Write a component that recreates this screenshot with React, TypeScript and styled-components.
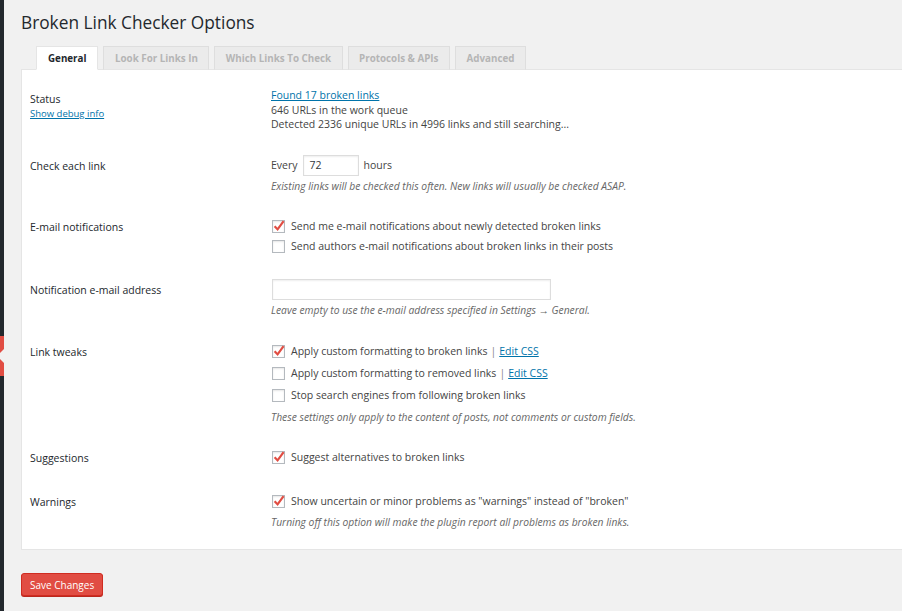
import React from "react";
import styled, { createGlobalStyle } from "styled-components";

const GlobalStyle = createGlobalStyle`
  html, body { margin: 0; padding: 0; background: #f1f1f1; }
  body {
    font-family: "Open Sans", "Noto Sans", sans-serif;
    font-size: 10.5px;
    color: #444;
  }
  * { box-sizing: border-box; }
`;

const Page = styled.div`
  display: flex;
  width: 902px;
  height: 611px;
  overflow: hidden;
`;

const Sidebar = styled.div`
  flex: none;
  width: 4px;
  background: #23282d;
  padding-top: 336px;
  overflow: hidden;
`;

const MenuMarker = styled.div`
  position: relative;
  height: 40px;
  background: #e14d43;
  &::after {
    content: "";
    position: absolute;
    right: 0;
    top: 50%;
    margin-top: -7px;
    width: 0;
    height: 0;
    border-top: 7px solid transparent;
    border-bottom: 7px solid transparent;
    border-right: 7px solid #f1f1f1;
  }
`;

const Main = styled.main`
  flex: 1;
  min-width: 0;
  padding-left: 17px;
`;

const Title = styled.h1`
  margin: 0;
  padding-top: 10px;
  font-size: 17.3px;
  line-height: 26px;
  font-weight: 400;
  color: #23282d;
`;

const TabBar = styled.nav`
  display: flex;
  gap: 5px;
  margin-top: 10px;
  padding-left: 15px;
  position: relative;
  z-index: 1;
`;

const Tab = styled.a<{ $active?: boolean }>`
  display: flex;
  align-items: center;
  height: 24px;
  margin-bottom: -1px;
  padding: 0 ${(p) => (p.$active ? 11 : 10.5)}px;
  font-size: 9.8px;
  font-weight: 700;
  text-decoration: none;
  border: 1px solid ${(p) => (p.$active ? "#e5e5e5" : "#dedede")};
  border-bottom-color: ${(p) => (p.$active ? "#fff" : "#e5e5e5")};
  background: ${(p) => (p.$active ? "#fff" : "#ebebeb")};
  color: ${(p) => (p.$active ? "#23282d" : "#b5b5b5")};
`;

const Panel = styled.section`
  background: #fff;
  border: 1px solid #e5e5e5;
  margin-right: -10px;
  padding: 6.5px 0 8px 8px;
`;

const Row = styled.div`
  display: grid;
  grid-template-columns: 241px 1fr;
  padding: 11.5px 0;
`;

const Label = styled.div`
  padding-top: 4px;
  line-height: 14.5px;
  color: #23282d;
  font-size: 10.5px;
`;

const Field = styled.div`
  line-height: 14.5px;
  color: #444;
`;

const Link = styled.a`
  color: #0073aa;
  text-decoration: underline;
`;

const SmallLink = styled(Link)`
  display: block;
  font-size: 9.5px;
`;

const Line = styled.div``;

const Hint = styled.p`
  margin: 3px 0 0;
  font-size: 10.3px;
  font-style: italic;
  color: #666;
  line-height: 14.5px;
`;

const Inline = styled.div`
  display: flex;
  align-items: center;
  gap: 5px;
`;

const TextInput = styled.div<{ $w: number }>`
  width: ${(p) => p.$w}px;
  height: 21px;
  border: 1px solid #ddd;
  box-shadow: inset 0 1px 2px rgba(0, 0, 0, 0.07);
  background: #fff;
  padding: 0 6px;
  display: flex;
  align-items: center;
  color: #32373c;
`;

const EmailInput = styled(TextInput)`
  margin-left: 1px;
`;

const CheckList = styled.div<{ $item: number }>`
  display: flex;
  flex-direction: column;
  & > label {
    height: ${(p) => p.$item}px;
  }
`;

const CheckItem = styled.label`
  display: flex;
  align-items: center;
  height: 21px;
  gap: 6px;
  padding-left: 1px;
  color: #444;
`;

const Box = styled.span`
  position: relative;
  flex: none;
  width: 13px;
  height: 13px;
  border: 1px solid #b4b9be;
  background: #fff;
  box-shadow: inset 0 1px 2px rgba(0, 0, 0, 0.1);
`;

const CheckMark = styled.svg`
  position: absolute;
  left: -1px;
  top: -2px;
`;

const Sep = styled.span`
  color: #888;
  margin: 0 3px;
`;

const SaveButton = styled.button`
  margin-top: 23px;
  height: 23px;
  padding: 0 8px;
  font-family: "Open Sans", "Noto Sans", sans-serif;
  font-size: 10px;
  color: #fff;
  background: #e14d43;
  border: 1px solid #d02c21;
  border-radius: 3px;
  box-shadow: 0 1px 0 #ba281e;
  cursor: pointer;
`;

function Check({ checked, children }: { checked?: boolean; children: React.ReactNode }) {
  return (
    <CheckItem>
      <Box>
        {checked && (
          <CheckMark width="14" height="14" viewBox="0 0 14 14">
            <path d="M2.6 7.2 L5.6 10.4 L11.6 2.2" fill="none" stroke="#e14d43" strokeWidth="2.2" strokeLinejoin="miter" />
          </CheckMark>
        )}
      </Box>
      <span>{children}</span>
    </CheckItem>
  );
}

export default function App() {
  const tabs = ["General", "Look For Links In", "Which Links To Check", "Protocols & APIs", "Advanced"];
  return (
    <>
      <GlobalStyle />
      <Page>
        <Sidebar>
          <MenuMarker />
        </Sidebar>
        <Main>
          <Title>Broken Link Checker Options</Title>
          <TabBar>
            {tabs.map((t, i) => (
              <Tab key={t} $active={i === 0}>
                {t}
              </Tab>
            ))}
          </TabBar>
          <Panel>
            <Row>
              <Label>
                Status
                <SmallLink>Show debug info</SmallLink>
              </Label>
              <Field>
                <Line>
                  <Link>Found 17 broken links</Link>
                </Line>
                <Line>646 URLs in the work queue</Line>
                <Line>Detected 2336 unique URLs in 4996 links and still searching...</Line>
              </Field>
            </Row>
            <Row>
              <Label>Check each link</Label>
              <Field>
                <Inline>
                  <span>Every</span>
                  <TextInput $w={56}>72</TextInput>
                  <span>hours</span>
                </Inline>
                <Hint>Existing links will be checked this often. New links will usually be checked ASAP.</Hint>
              </Field>
            </Row>
            <Row>
              <Label>E-mail notifications</Label>
              <Field>
                <CheckList $item={20}>
                  <Check checked>Send me e-mail notifications about newly detected broken links</Check>
                  <Check>Send authors e-mail notifications about broken links in their posts</Check>
                </CheckList>
              </Field>
            </Row>
            <Row>
              <Label>Notification e-mail address</Label>
              <Field>
                <EmailInput $w={279} />
                <Hint>Leave empty to use the e-mail address specified in Settings → General.</Hint>
              </Field>
            </Row>
            <Row>
              <Label>Link tweaks</Label>
              <Field>
                <CheckList $item={22}>
                  <Check checked>
                    Apply custom formatting to broken links<Sep>|</Sep>
                    <Link>Edit CSS</Link>
                  </Check>
                  <Check>
                    Apply custom formatting to removed links<Sep>|</Sep>
                    <Link>Edit CSS</Link>
                  </Check>
                  <Check>Stop search engines from following broken links</Check>
                </CheckList>
                <Hint>These settings only apply to the content of posts, not comments or custom fields.</Hint>
              </Field>
            </Row>
            <Row>
              <Label>Suggestions</Label>
              <Field>
                <CheckList $item={21}>
                  <Check checked>Suggest alternatives to broken links</Check>
                </CheckList>
              </Field>
            </Row>
            <Row>
              <Label>Warnings</Label>
              <Field>
                <CheckList $item={21}>
                  <Check checked>Show uncertain or minor problems as "warnings" instead of "broken"</Check>
                </CheckList>
                <Hint>Turning off this option will make the plugin report all problems as broken links.</Hint>
              </Field>
            </Row>
          </Panel>
          <SaveButton>Save Changes</SaveButton>
        </Main>
      </Page>
    </>
  );
}
